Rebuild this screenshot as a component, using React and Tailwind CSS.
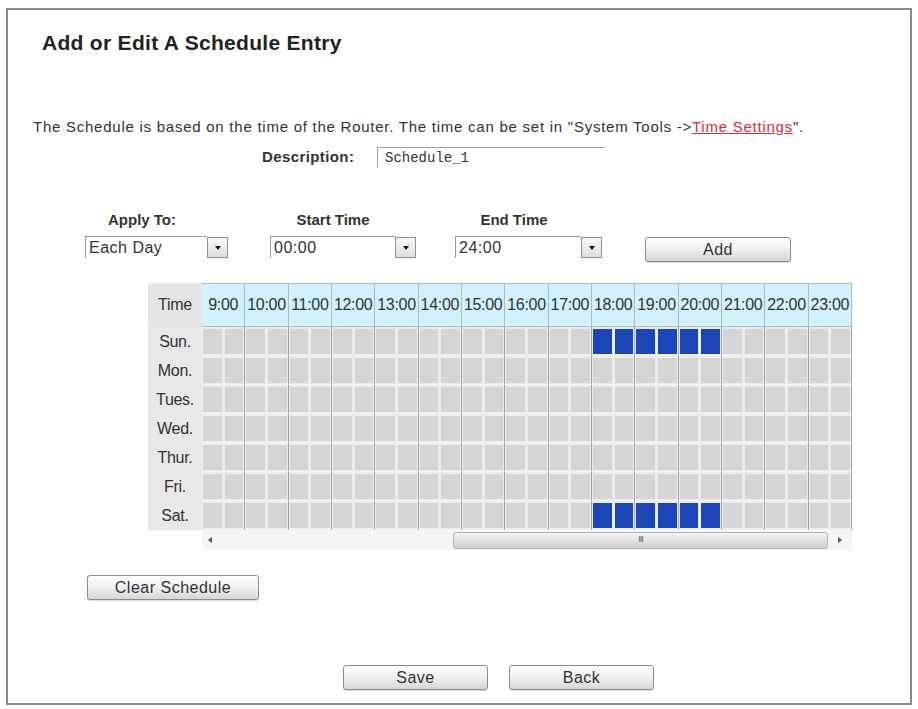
import React from "react";

const hours = ["9:00", "10:00", "11:00", "12:00", "13:00", "14:00", "15:00", "16:00", "17:00", "18:00", "19:00", "20:00", "21:00", "22:00", "23:00"];
const days = ["Sun.", "Mon.", "Tues.", "Wed.", "Thur.", "Fri.", "Sat."];
// hours 18:00 - 20:30 are on for Sunday and Saturday
const isOn = (day, hour) => (day === "Sun." || day === "Sat.") && hour >= 9 && hour <= 11;

function Select({ value, width }) {
  return (
    <div className={`flex items-start h-[24px] ${width}`}>
      <div className="flex-1 h-[22px] border-t border-l border-[#9a9a9a] pl-[3px] text-[16px] leading-[22px] tracking-[0.5px] text-[#333]">
        {value}
      </div>
      <div className="w-[21px] h-[21px] mt-[1px] border border-[#8f8f8f] bg-gradient-to-b from-[#fafafa] to-[#dedede] flex items-center justify-center">
        <span className="block w-0 h-0 border-l-[3px] border-r-[3px] border-t-[4px] border-l-transparent border-r-transparent border-t-[#111]" />
      </div>
    </div>
  );
}

function Button({ children, className }) {
  return (
    <button className={`h-[25px] border border-[#8c8c8c] rounded-[3px] bg-gradient-to-b from-[#ffffff] via-[#f0f0f0] to-[#d6d6d6] text-[16px] leading-[23px] tracking-[0.5px] text-[#333] shadow-[0_1px_1px_rgba(0,0,0,0.15)] ${className}`}>
      {children}
    </button>
  );
}

export default function App() {
  return (
    <div className="w-[918px] h-[709px] bg-white pt-[8px] pl-[6px] font-['Liberation_Sans',Arial,sans-serif] text-[#333]">
      <div className="w-[906px] h-[697px] border-2 border-[#8a8a8a] flex flex-col">
        <h1 className="mt-[21px] pl-[34px] text-[21px] leading-[24px] tracking-[0.3px] font-bold text-[#222]">
          Add or Edit A Schedule Entry
        </h1>

        <p className="mt-[63px] pl-[25px] text-[15px] leading-[18px] tracking-[0.75px] text-[#333]">
          The Schedule is based on the time of the Router. The time can be set in "System Tools -&gt;
          <a className="text-[#df2a3c] underline">Time Settings</a>".
        </p>

        <div className="mt-[11px] ml-[254px] flex items-center h-[20px]">
          <span className="w-[115px] text-[15px] font-bold tracking-[0.4px] text-[#333]">Description:</span>
          <div className="w-[228px] h-[20px] border-t border-l border-[#a0a0a0] pl-[7px] font-['Liberation_Mono',monospace] text-[14px] leading-[20px] text-[#333]">
            Schedule_1
          </div>
        </div>

        <div className="mt-[44px] flex text-[15px] leading-[18px] font-bold text-[#333]">
          <span className="ml-[67px] w-[134px] text-center">Apply To:</span>
          <span className="ml-[57px] w-[134px] text-center">Start Time</span>
          <span className="ml-[47px] w-[134px] text-center">End Time</span>
        </div>

        <div className="mt-[7px] flex items-start h-[26px]">
          <div className="ml-[77px]">
            <Select value="Each Day" width="w-[143px]" />
          </div>
          <div className="ml-[42px]">
            <Select value="00:00" width="w-[146px]" />
          </div>
          <div className="ml-[39px]">
            <Select value="24:00" width="w-[147px]" />
          </div>
          <Button className="ml-[43px] mt-[1px] w-[146px]">Add</Button>
        </div>

        <div className="mt-[21px] ml-[140px] w-[704px] grid grid-cols-[54px_repeat(15,minmax(0,1fr))] text-[16px] text-[#333] tracking-[-0.3px]">
          <div className="h-[44px] bg-[#e4e4e4] flex items-center justify-center">Time</div>
          {hours.map(h => (
            <div key={h} className="h-[44px] bg-[#d3f1fc] border-t border-r border-b border-[#a7bcc5] flex items-center justify-center whitespace-nowrap">
              {h}
            </div>
          ))}

          {days.map(d => (
            <React.Fragment key={d}>
              <div className="h-[29px] bg-[#e8e8e8] flex items-center justify-center">{d}</div>
              {hours.map((h, i) => (
                <div key={h} className="h-[29px] bg-[#ececec] border-r border-[#a3a3a3] border-b-[1px] border-b-[#f4f4f4] flex gap-[3px] px-[1px] pt-[2px] pb-[1px]">
                  <div className={`flex-1 ${isOn(d, i) ? "bg-[#1c46b6]" : "bg-[#d6d4d4]"}`} />
                  <div className={`flex-1 ${isOn(d, i) ? "bg-[#1c46b6]" : "bg-[#d6d4d4]"}`} />
                </div>
              ))}
            </React.Fragment>
          ))}

          <div className="h-[20px]" />
          <div className="col-span-15 h-[20px] bg-[#f5f5f5] flex items-center">
            <span className="ml-[6px] block w-0 h-0 border-t-[3px] border-b-[3px] border-r-[4px] border-t-transparent border-b-transparent border-r-[#555]" />
            <div className="ml-[241px] w-[375px] h-[17px] rounded-[3px] border border-[#b5b5b5] bg-gradient-to-b from-[#f4f4f4] to-[#cfcfcf] flex items-center justify-center text-[9px] text-[#666] tracking-[-1px]">
              III
            </div>
            <span className="ml-[10px] block w-0 h-0 border-t-[3px] border-b-[3px] border-l-[4px] border-t-transparent border-b-transparent border-l-[#555]" />
          </div>
        </div>

        <div className="mt-[25px] ml-[79px]">
          <Button className="w-[172px]">Clear Schedule</Button>
        </div>

        <div className="mt-[65px] ml-[335px] flex gap-[21px]">
          <Button className="w-[145px]">Save</Button>
          <Button className="w-[145px]">Back</Button>
        </div>
      </div>
    </div>
  );
}
